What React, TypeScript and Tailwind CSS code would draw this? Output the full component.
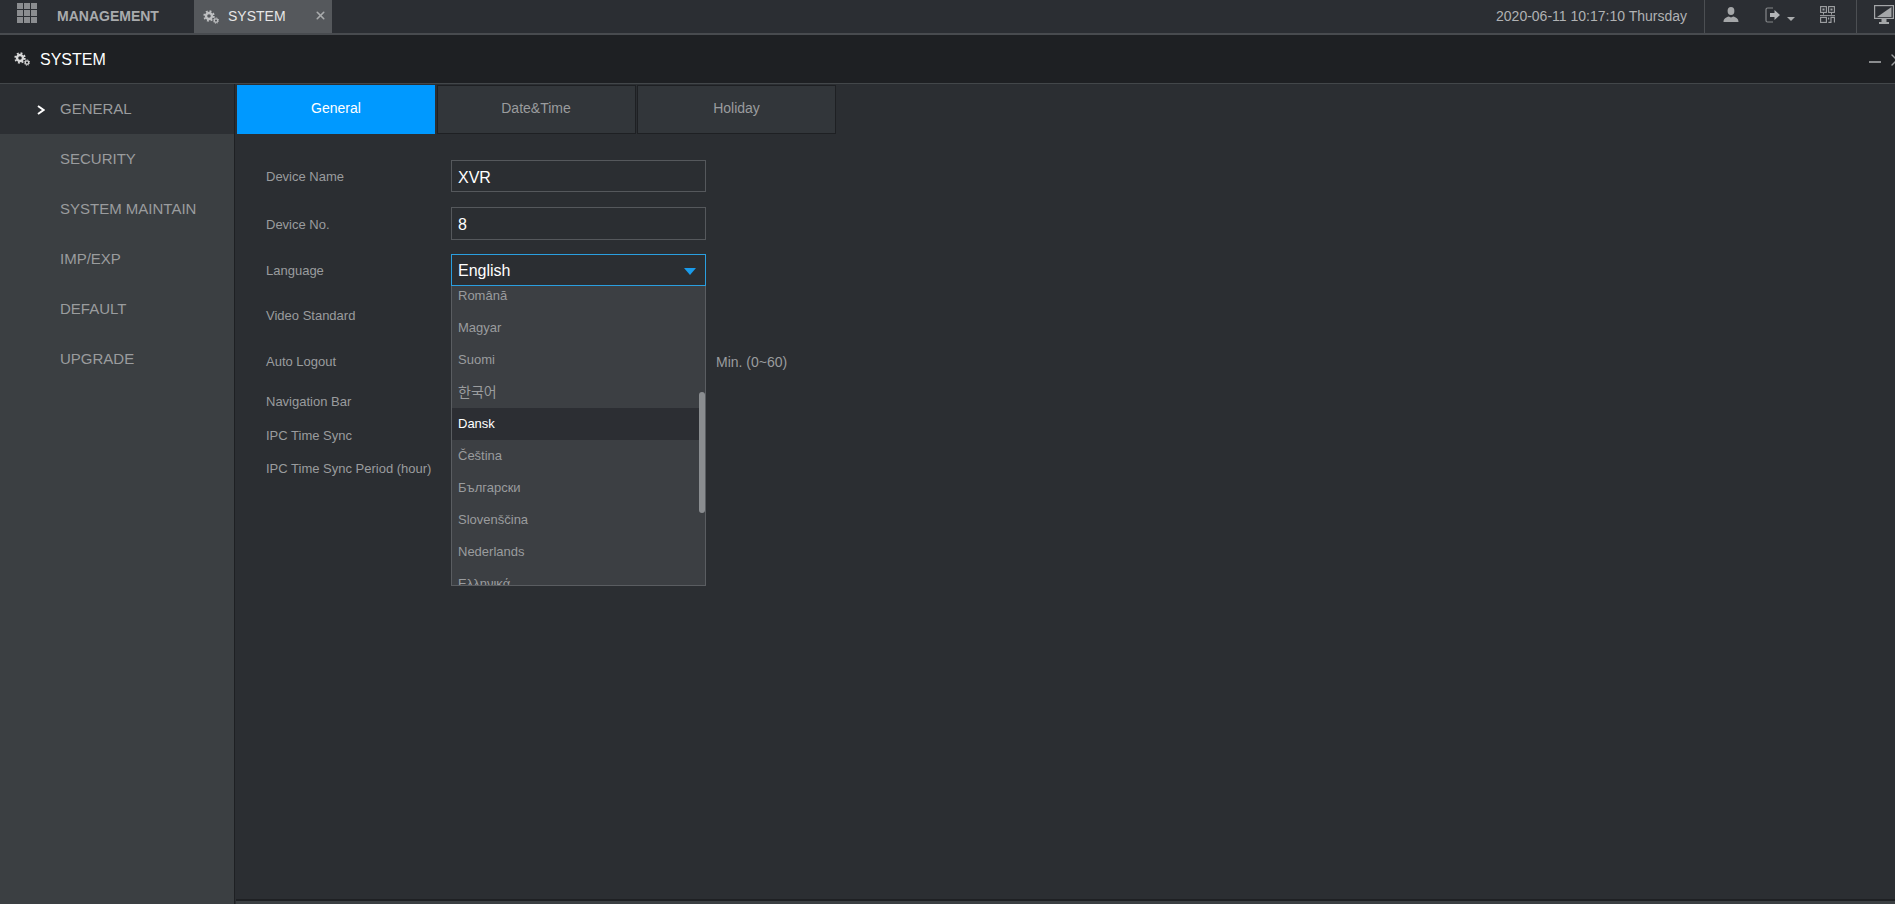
import { X } from "lucide-react";

const menu = ["GENERAL", "SECURITY", "SYSTEM MAINTAIN", "IMP/EXP", "DEFAULT", "UPGRADE"];

const tabs = ["General", "Date&Time", "Holiday"];

const languages = [
  "Română",
  "Magyar",
  "Suomi",
  "한국어",
  "Dansk",
  "Čeština",
  "Български",
  "Slovenščina",
  "Nederlands",
  "Ελληνικά",
];

function GearsIcon({ className }: { className: string }) {
  return (
    <svg viewBox="0 0 16 14" className={className} fill="none" stroke="currentColor">
      <circle cx="6" cy="6" r="3" strokeWidth="2.4" />
      <circle cx="6" cy="6" r="4.8" strokeWidth="1.8" strokeDasharray="1.9 1.87" />
      <circle cx="13" cy="10.6" r="1.7" strokeWidth="1.2" />
      <circle cx="13" cy="10.6" r="2.7" strokeWidth="1" strokeDasharray="1.1 1.02" />
    </svg>
  );
}

function GridIcon() {
  return (
    <div className="grid h-5 w-5 grid-cols-3 gap-px">
      {Array.from({ length: 9 }).map((_, i) => (
        <span key={i} className="bg-[#8b8d90]" />
      ))}
    </div>
  );
}

function UserIcon() {
  return (
    <svg viewBox="0 0 16 15" className="h-[15px] w-4 text-[#a4a6a8]" fill="currentColor">
      <ellipse cx="8" cy="4" rx="3.4" ry="4" />
      <path d="M0.5 15 C0.5 11.5 3 10.5 5.8 9.6 L8 10.6 L10.2 9.6 C13 10.5 15.5 11.5 15.5 15 Z" />
    </svg>
  );
}

function LogoutIcon() {
  return (
    <svg viewBox="0 0 20 16" className="h-4 w-5">
      <path d="M8 1 H2.5 A1.5 1.5 0 0 0 1 2.5 V13.5 A1.5 1.5 0 0 0 2.5 15 H8" fill="none" stroke="#85878a" strokeWidth="1.2" />
      <path d="M5 6 H9.5 V3 L15 8 L9.5 13 V10 H5 Z" fill="#b4b6b8" />
    </svg>
  );
}

function QrIcon() {
  return (
    <svg viewBox="0 0 15 17" className="h-[17px] w-[15px] text-[#a0a2a5]" fill="none" stroke="currentColor" strokeWidth="1.1">
      <rect x="0.6" y="0.6" width="5.8" height="5.8" />
      <rect x="8.6" y="0.6" width="5.8" height="5.8" />
      <rect x="2.5" y="2.5" width="2" height="2" fill="currentColor" stroke="none" />
      <rect x="10.5" y="2.5" width="2" height="2" fill="currentColor" stroke="none" />
      <path d="M3.5 6.4 V8.6 M11.5 6.4 V8.6 M0 9.6 H15" strokeWidth="1" />
      <rect x="0.6" y="11.4" width="5.8" height="5" />
      <path d="M8.4 16.4 H11 V11.4 H14.4 V16.4 M8.6 11.4 V13.5" />
    </svg>
  );
}

function MonitorIcon() {
  return (
    <svg viewBox="0 0 20 19" className="h-[19px] w-5 shrink-0 text-[#a4a6a8]">
      <rect x="0.6" y="0.6" width="18.8" height="12.8" fill="none" stroke="currentColor" strokeWidth="1.2" />
      <path d="M3 12 L17.5 2 V12 Z" fill="currentColor" />
      <path d="M7.5 14 H12.5 V17 H15 V19 H5 V17 H7.5 Z" fill="currentColor" />
    </svg>
  );
}

function LanguageDropdown() {
  return (
    <div className="absolute left-0 top-[31px] z-10 h-[300px] w-[255px] overflow-hidden border border-t-0 border-[#5a5d61] bg-[#3c3f43]">
      <div className="-mt-[6px]">
        {languages.map((lang) => (
          <div
            key={lang}
            className={
              lang === "Dansk"
                ? "h-8 bg-[#2c2e33] px-[6px] text-[13px] leading-8 text-white"
                : lang === "한국어"
                  ? "h-8 px-[6px] text-[14px] leading-8 text-[#9a9c9e]"
                  : "h-8 px-[6px] text-[13px] leading-8 text-[#9a9c9e]"
            }
          >
            {lang}
          </div>
        ))}
      </div>
      <div className="absolute right-0 top-[106px] h-[121px] w-[6px] rounded-[3px] bg-[#8a8d90]" />
    </div>
  );
}

export default function App() {
  return (
    <div className="flex h-[904px] w-[1895px] flex-col overflow-hidden bg-[#2b2e32] font-['Liberation_Sans','Noto_Sans_CJK_KR',sans-serif]">
      {/* Top bar */}
      <div className="flex h-[35px] shrink-0 items-stretch border-b-2 border-[#484b4f] bg-[#2b2e33]">
        <div className="flex w-[194px] items-center pb-[8px] pl-[17px]">
          <GridIcon />
          <span className="ml-[20px] pt-[8px] text-[14px] font-bold text-[#a9abad]">MANAGEMENT</span>
        </div>
        <div className="flex w-[138px] items-center bg-[#55585c] pl-[9px]">
          <GearsIcon className="h-[14px] w-4 text-[#bfc0c2]" />
          <span className="ml-[9px] text-[14px] text-[#e6e6e6]">SYSTEM</span>
          <X size={13} strokeWidth={3} className="ml-[28px] mb-[2px] text-[#a9abad]" />
        </div>
        <span className="ml-auto self-center pl-[1px] text-[14px] text-[#b0b2b4]">2020-06-11 10:17:10 Thursday</span>
        <div className="ml-[17px] flex w-[153px] items-center border-x border-[#4c4f53] pb-[4px] pl-[18px]">
          <UserIcon />
          <div className="ml-[26px]">
            <LogoutIcon />
          </div>
          <span className="ml-[2px] mt-[8px] h-0 w-0 border-x-[4px] border-t-[4px] border-x-transparent border-t-[#a9abad]" />
          <div className="ml-[25px]">
            <QrIcon />
          </div>
        </div>
        <div className="ml-[17px] flex w-[21px] items-center overflow-hidden pb-[4px]">
          <MonitorIcon />
        </div>
      </div>

      {/* Window title */}
      <div className="flex h-[49px] shrink-0 items-center border-b border-[#43474a] bg-[#1e2023]">
        <GearsIcon className="ml-[14px] h-[14px] w-4 text-[#d8d8d8]" />
        <span className="ml-[10px] pt-[1px] text-[16px] text-white">SYSTEM</span>
        <span className="ml-auto mt-[6px] h-[2px] w-3 bg-[#8a8c8e]" />
        <X size={20} strokeWidth={1.6} className="-mr-[12px] ml-[6px] mt-[2px] shrink-0 text-[#9a9c9e]" />
      </div>

      <div className="flex min-h-0 flex-1">
        {/* Side menu */}
        <div className="w-[234px] shrink-0 bg-[#3b3f42]">
          {menu.map((item) => (
            <div
              key={item}
              className={
                item === "GENERAL"
                  ? "relative flex h-[50px] items-center bg-[#2c2f33] pl-[60px] text-[15px] text-[#9a9c9e]"
                  : "flex h-[50px] items-center pl-[60px] text-[15px] text-[#9a9c9e]"
              }
            >
              {item === "GENERAL" && (
                <svg viewBox="0 0 8 10" className="absolute left-[37px] top-[21px] h-[10px] w-2" fill="none" stroke="white" strokeWidth="2">
                  <path d="M1 1 L6.5 5 L1 9" />
                </svg>
              )}
              {item}
            </div>
          ))}
        </div>

        {/* Content */}
        <div className="flex min-w-0 flex-1 flex-col border-l border-[#1e2023]">
          <div className="flex gap-[1.5px] pb-[1px] pl-[2px] pt-[1px]">
            {tabs.map((tab) => (
              <div
                key={tab}
                className={
                  tab === "General"
                    ? "flex h-[49px] w-[198px] items-center justify-center bg-[#0099ff] pb-[3px] text-[14px] text-white"
                    : "flex h-[49px] w-[199px] items-center justify-center border border-[#1e2023] bg-[#32363a] pb-[3px] text-[14px] text-[#9a9c9e]"
                }
              >
                {tab}
              </div>
            ))}
          </div>

          <div className="flex-1 pl-[31px] pt-[25px] text-[13px] text-[#9a9c9e]">
            <div className="mb-[15px] flex h-8 items-center">
              <span className="w-[185px] pt-[2px]">Device Name</span>
              <div className="flex h-8 w-[255px] items-center border border-[#55585c] px-[6px] pt-[3px] text-[16px] text-white">XVR</div>
            </div>
            <div className="mb-[14px] flex h-[33px] items-center">
              <span className="w-[185px] pt-[2px]">Device No.</span>
              <div className="flex h-[33px] w-[255px] items-center border border-[#55585c] px-[6px] pt-[2px] text-[16px] text-white">8</div>
            </div>
            <div className="flex h-8 items-center">
              <span className="w-[185px] pt-[2px]">Language</span>
              <div className="relative flex h-8 w-[255px] items-center border border-[#2a9fe0] px-[6px] pt-[1px] text-[16px] text-white">
                English
                <span className="absolute right-[9px] top-[13px] h-0 w-0 border-x-[6px] border-t-[7px] border-x-transparent border-t-[#1a9bea]" />
                <div className="absolute -left-px top-0">
                  <LanguageDropdown />
                </div>
              </div>
            </div>
            <div className="mt-[14px] flex h-8 items-center">
              <span>Video Standard</span>
            </div>
            <div className="mt-[14px] flex h-8 items-center">
              <span className="w-[450px]">Auto Logout</span>
              <span className="text-[14px]">Min. (0~60)</span>
            </div>
            <div className="mt-[10px] flex h-7 items-center">Navigation Bar</div>
            <div className="mt-[6px] flex h-7 items-center">IPC Time Sync</div>
            <div className="mt-[5px] flex h-7 items-center">IPC Time Sync Period (hour)</div>
          </div>

          <div className="ml-[1px] h-[5px] shrink-0 border-t-2 border-[#1e2023] bg-[#3b3f42]" />
        </div>
      </div>
    </div>
  );
}
